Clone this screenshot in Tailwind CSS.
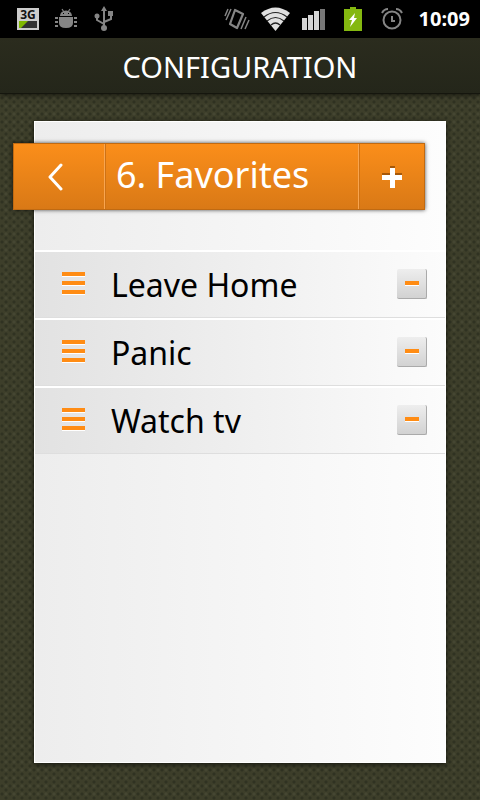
<!DOCTYPE html>
<html lang="en">
<head>
  <meta charset="UTF-8">
  <meta name="viewport" content="width=device-width, initial-scale=1.0">
  <title>Configuration - Favorites</title>
  <script src="https://cdn.jsdelivr.net/npm/@tailwindcss/browser@4"></script>
</head>
<body class="bg-[#3d3e2a] font-['Noto_Sans',sans-serif]">
  <div class="flex min-h-screen flex-col bg-[radial-gradient(circle_at_25%_25%,#303222_0_1px,transparent_2px),radial-gradient(circle_at_75%_75%,#303222_0_1px,transparent_2px),radial-gradient(circle_at_75%_25%,#454632_0_1px,transparent_2px)] bg-[length:8px_8px]">
    <!-- Status bar -->
    <div class="flex h-[38px] shrink-0 items-center justify-between bg-black pl-[17px] pr-[10px]">
      <div class="flex items-center gap-4">
        <svg class="h-6 w-[22px]" viewBox="0 0 22 24">
          <path d="M0 1h22v22H0z" fill="#ccc"/>
          <path d="M2 14h18v7H2z" fill="#333"/>
          <path d="M2 14h9l-7 7H2z" fill="#80b800"/>
          <text x="11" y="12" text-anchor="middle" font-size="12" font-weight="700" fill="#111">3G</text>
        </svg>
        <svg class="h-6 w-[22px]" viewBox="0 0 22 24" fill="#858585">
          <path d="M5 9a6 5.500 0 0 1 12 0zM4 10h14v6q0 5-7 5t-7-5z"/>
          <path d="M7 2l2 3M15 2l-2 3" stroke="#858585" stroke-width="1.200"/>
          <path d="M0 11h3M0 15h3M0 19h3M19 11h3M19 15h3M19 19h3" stroke="#858585" stroke-width="2"/>
          <path d="M8 6h1v1H8zM13 6h1v1h-1z" fill="#000"/>
        </svg>
        <svg class="h-[26px] w-[22px]" viewBox="0 0 22 26" fill="none" stroke="#858585" stroke-width="2">
          <path d="M11 4v17M4 10v4l7 4M18 9v4l-7 3"/>
          <path d="M11 0l3 5H8zM15 5h5v5h-5z" fill="#858585" stroke="none"/>
          <circle cx="4" cy="10" r="2.500" fill="#858585" stroke="none"/>
          <circle cx="11" cy="22" r="3" fill="#858585" stroke="none"/>
        </svg>
      </div>
      <div class="flex items-center">
        <svg class="mr-[11px] h-[22px] w-[26px]" viewBox="0 0 26 22" fill="none" stroke="#858585">
          <path d="M11 2l8 4-6 14-7-4z" stroke-width="2.200" stroke-linejoin="round"/>
          <path d="M4 1L1 8M7 1L2 12M22 9l-5 12M25 12l-4 9" stroke-width="1.500"/>
        </svg>
        <svg class="mr-3 h-6 w-[29px]" viewBox="0 0 29 24">
          <path d="M0 6Q14.500-5 29 6L14.500 24z" fill="#e0e0e0"/>
          <path d="M3 10q11.500-9 23 0M6 14q8.500-7 17 0M10 18q4.500-4 9 0" fill="none" stroke="#222" stroke-width="1.200"/>
        </svg>
        <svg class="mr-[18px] h-[22px] w-6" viewBox="0 0 24 22">
          <path d="M0 10h5v12H0zM6 7h5v15H6zM12 3h5v19h-5z" fill="#d5d5d5"/>
          <path d="M18 1h5v21h-5z" fill="#777"/>
        </svg>
        <svg class="mr-[19px] h-6 w-[18px]" viewBox="0 0 18 24">
          <path d="M6 0h6v2h6v22H0V2h6z" fill="#84b810"/>
          <path d="M11 6l-6 7h3l-2 7 7-9h-3z" fill="#fff"/>
        </svg>
        <svg class="mr-4 h-[22px] w-[22px]" viewBox="0 0 22 22" fill="none" stroke="#858585" stroke-width="2">
          <circle cx="11" cy="12" r="8.500"/>
          <path d="M1 5q2-4 6-4M21 5q-2-4-6-4M11 8v5h3"/>
        </svg>
        <span class="text-[20px] leading-6 font-bold text-white">10:09</span>
      </div>
    </div>

    <header class="z-10 flex h-14 shrink-0 items-center justify-center border-b border-[#15160e] bg-linear-to-b from-[#2b2c1e] to-[#24261a] pt-[2px] shadow-[0_2px_5px_rgba(0,0,0,0.5)]">
      <h1 class="text-[29px] leading-9 text-white">CONFIGURATION</h1>
    </header>

    <main class="mx-[34px] mt-[27px] mb-[37px] flex-1 border border-white bg-linear-to-r from-[#ededed] to-[#fdfdfd] pt-[21px] shadow-[0_1px_5px_rgba(0,0,0,0.7)]">
      <div class="mr-5 -ml-[22px] flex h-[67px] border border-[#c06a12] bg-linear-to-b from-[#fb8e1a] to-[#d97916] text-white shadow-[0_0_4px_rgba(0,0,0,0.7)]">
        <button type="button" aria-label="Back" class="flex w-[91px] items-center justify-center border-r border-[#f8a550] pr-2">
          <svg class="h-7 w-4" viewBox="0 0 16 28" fill="none" stroke="#fff" stroke-width="3" stroke-linecap="round" stroke-linejoin="round">
            <path d="M14 2L3 14 14 26"/>
          </svg>
        </button>
        <h2 class="flex-1 border-x border-l-[#ce7215] border-r-[#f8a550] pl-[10px] text-[36px] leading-[62px]">6. Favorites</h2>
        <button type="button" aria-label="Add favorite" class="flex w-[65px] items-center justify-center border-l border-[#ce7215]">
          <svg class="h-[22px] w-5" viewBox="0 0 20 22">
            <path d="M8 0h5v7h7v5H0V7h8z" fill="#a65809"/>
            <path d="M8 2h5v7h7v5h-7v8H8v-8H0V9h8z" fill="#fff"/>
          </svg>
        </button>
      </div>

      <ul class="mt-[40px]">
        <li class="flex h-[68px] items-center border-t-2 border-white bg-linear-to-r from-[#e2e2e2] to-[#fcfcfc] pr-[18px] pl-[27px] shadow-[inset_0_-1px_#dedede]">
          <svg class="mb-1 h-6 w-[23px]" viewBox="0 0 23 24"><path d="M0 5h23v1H0zM0 14h23v1H0zM0 23h23v1H0z" fill="#fff"/><path d="M0 1h23v4H0zM0 10h23v4H0zM0 19h23v4H0z" fill="#ff8c14"/></svg>
          <span class="ml-[26px] flex-1 text-[32px] leading-10 text-black">Leave Home</span>
          <button type="button" aria-label="Remove Leave Home" class="mb-[2px] flex size-[30px] items-center justify-center rounded-xs border-r border-b border-[#aaa] bg-linear-to-b from-[#eee] to-[#d2d2d2]">
            <svg class="h-[5px] w-[14px]" viewBox="0 0 14 5"><path d="M0 4h14v1H0z" fill="#fff"/><path d="M0 0h14v4H0z" fill="#ff8c14"/></svg>
          </button>
        </li>
        <li class="flex h-[68px] items-center border-t-2 border-white bg-linear-to-r from-[#e2e2e2] to-[#fcfcfc] pr-[18px] pl-[27px] shadow-[inset_0_-1px_#dedede]">
          <svg class="mb-1 h-6 w-[23px]" viewBox="0 0 23 24"><path d="M0 5h23v1H0zM0 14h23v1H0zM0 23h23v1H0z" fill="#fff"/><path d="M0 1h23v4H0zM0 10h23v4H0zM0 19h23v4H0z" fill="#ff8c14"/></svg>
          <span class="ml-[26px] flex-1 text-[32px] leading-10 text-black">Panic</span>
          <button type="button" aria-label="Remove Panic" class="mb-[2px] flex size-[30px] items-center justify-center rounded-xs border-r border-b border-[#aaa] bg-linear-to-b from-[#eee] to-[#d2d2d2]">
            <svg class="h-[5px] w-[14px]" viewBox="0 0 14 5"><path d="M0 4h14v1H0z" fill="#fff"/><path d="M0 0h14v4H0z" fill="#ff8c14"/></svg>
          </button>
        </li>
        <li class="flex h-[68px] items-center border-t-2 border-white bg-linear-to-r from-[#e2e2e2] to-[#fcfcfc] pr-[18px] pl-[27px] shadow-[inset_0_-1px_#dedede]">
          <svg class="mb-1 h-6 w-[23px]" viewBox="0 0 23 24"><path d="M0 5h23v1H0zM0 14h23v1H0zM0 23h23v1H0z" fill="#fff"/><path d="M0 1h23v4H0zM0 10h23v4H0zM0 19h23v4H0z" fill="#ff8c14"/></svg>
          <span class="ml-[26px] flex-1 text-[32px] leading-10 text-black">Watch tv</span>
          <button type="button" aria-label="Remove Watch tv" class="mb-[2px] flex size-[30px] items-center justify-center rounded-xs border-r border-b border-[#aaa] bg-linear-to-b from-[#eee] to-[#d2d2d2]">
            <svg class="h-[5px] w-[14px]" viewBox="0 0 14 5"><path d="M0 4h14v1H0z" fill="#fff"/><path d="M0 0h14v4H0z" fill="#ff8c14"/></svg>
          </button>
        </li>
      </ul>
    </main>
  </div>
</body>
</html>
